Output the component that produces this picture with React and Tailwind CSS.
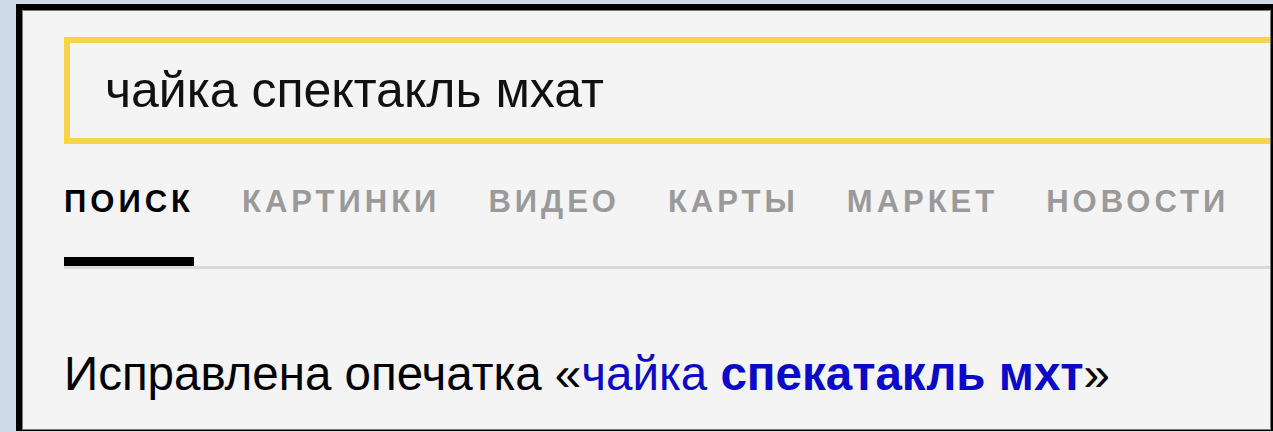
export default function App() {
  const tabs = ["КАРТИНКИ", "ВИДЕО", "КАРТЫ", "МАРКЕТ", "НОВОСТИ"];
  return (
    <div
      className="w-[1273px] h-[432px] overflow-hidden bg-[#cddae6] pl-[16px] pt-[4px]"
      style={{ fontFamily: '"Liberation Sans", Arial, sans-serif' }}
    >
      <div className="h-[427px] border-l-[6px] border-t-[6px] border-r-[2px] border-b border-black">
        <div className="h-full border border-[#7a7a7a] bg-[#f4f4f4] overflow-hidden">
          {/* search field */}
          <div className="ml-[41px] mt-[26px] h-[107px] border-y-[6px] border-l-[6px] border-[#f6d44b] flex items-center pl-[35px]">
            <span className="text-[50px] leading-none text-[#111] pb-[2px]">чайка спектакль мхат</span>
          </div>

          {/* service tabs */}
          <div className="ml-[41px] mt-[42px] flex gap-[48px] border-b-[3px] border-[#dadada]">
            <div className="flex flex-col">
              <span className="text-[31px] leading-none font-bold tracking-[4px] text-black">ПОИСК</span>
              <div className="mt-[40px] h-[9px] w-[130px] bg-black" />
            </div>
            {tabs.map((t) => (
              <span key={t} className="text-[31px] leading-none font-bold tracking-[4px] text-[#9a9a9a]">
                {t}
              </span>
            ))}
          </div>

          {/* spelling correction */}
          <div className="ml-[41px] mt-[81px] text-[47.5px] leading-none text-black">
            Исправлена опечатка «<span className="text-[#0a0ac8]">чайка </span>
            <span className="text-[#0a0ac8] font-bold">спекатакль мхт</span>»
          </div>
        </div>
      </div>
    </div>
  );
}
